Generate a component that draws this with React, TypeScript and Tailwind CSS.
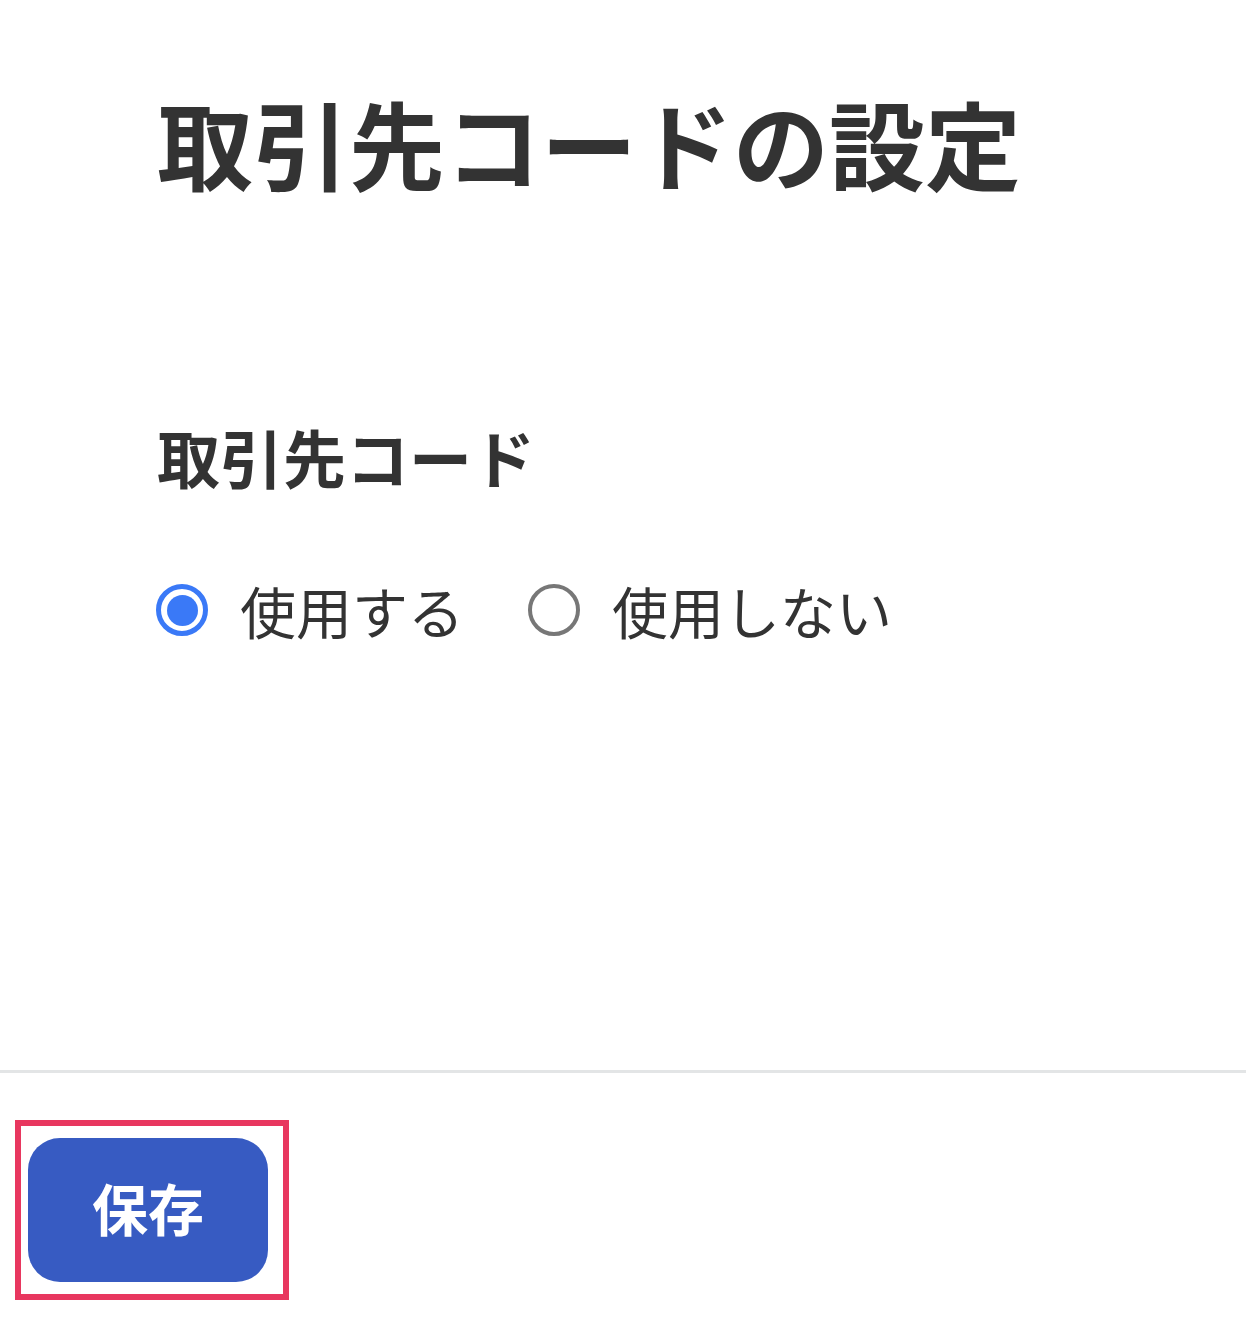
import { useState } from "react";

const font = { fontFamily: '"Noto Sans CJK JP", "Noto Sans", sans-serif' };

function Radio({ checked, label, onSelect }: { checked: boolean; label: string; onSelect: () => void }) {
  return (
    <button type="button" className="flex items-center gap-[32px]" onClick={onSelect}>
      {checked ? (
        <span className="flex h-[52px] w-[52px] items-center justify-center rounded-full border-[5px] border-[#3a79f7]">
          <span className="h-[31px] w-[31px] rounded-full bg-[#3a79f7]" />
        </span>
      ) : (
        <span className="h-[52px] w-[52px] rounded-full border-[4px] border-[#777777]" />
      )}
      <span className="text-[56px] leading-none text-[#333333]">{label}</span>
    </button>
  );
}

export default function App() {
  const [useCode, setUseCode] = useState(true);

  return (
    <div className="flex h-[1320px] w-full flex-col bg-white" style={font}>
      <div className="flex h-[1070px] flex-col pl-[157px]">
        <h1 className="mt-[94px] text-[96px] font-bold leading-none text-[#333333]">取引先コードの設定</h1>
        <h2 className="mt-[234px] text-[63px] font-bold leading-none text-[#333333]">取引先コード</h2>
        <div className="mt-[95px] -ml-[1px] flex items-center gap-[64px]">
          <Radio checked={useCode} label="使用する" onSelect={() => setUseCode(true)} />
          <Radio checked={!useCode} label="使用しない" onSelect={() => setUseCode(false)} />
        </div>
      </div>
      <div className="h-[3px] w-full bg-[#e3e5e6]" />
      <div className="pl-[15px] pt-[47px]">
        <div className="h-[180px] w-[274px] border-[6px] border-[#e8375f] pl-[7px] pt-[12px]">
          <button
            type="button"
            className="flex h-[144px] w-[240px] items-center justify-center rounded-[32px] bg-[#375bc2] pb-[6px] text-[56px] font-bold text-white"
          >
            保存
          </button>
        </div>
      </div>
    </div>
  );
}
